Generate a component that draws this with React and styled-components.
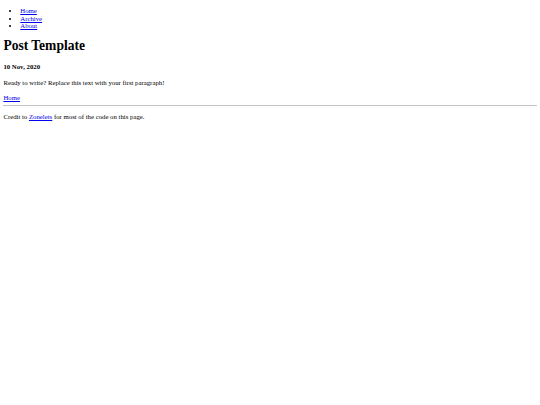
import React from 'react';
import styled, { createGlobalStyle } from 'styled-components';

const GlobalStyle = createGlobalStyle`
  html, body {
    background: #fff;
  }
  body {
    margin: 0 3.4px 3.4px;
    font-family: "Liberation Serif", "Times New Roman", serif;
    font-size: 6.77px;
    line-height: 1.15;
    color: #000;
  }
`;

const NavList = styled.ul`
  margin: 6.77px 0;
  padding-left: 16.9px;
  list-style: disc;
`;

const NavItem = styled.li`
  line-height: 1.15;
`;

const Link = styled.a`
  color: #0000ee;
  text-decoration: underline;
`;

const Title = styled.h1`
  font-size: 13.54px;
  font-weight: 700;
  line-height: 1.15;
  margin: 8px 0 9.07px;
`;

const DateLine = styled.h4`
  font-size: 6.77px;
  font-weight: 700;
  margin: 9px 0;
`;

const Paragraph = styled.p`
  margin: 6.77px 0;
`;

const BackLink = styled.div`
  margin: 0;
`;

const Divider = styled.hr`
  margin: 3.4px 0;
  border: none;
  border-top: 1px solid #c4c4c4;
  height: 0;
`;

export default function App() {
  return (
    <>
      <GlobalStyle />
      <nav>
        <NavList>
          <NavItem><Link href="#">Home</Link></NavItem>
          <NavItem><Link href="#">Archive</Link></NavItem>
          <NavItem><Link href="#">About</Link></NavItem>
        </NavList>
      </nav>
      <main>
        <Title>Post Template</Title>
        <DateLine>10 Nov, 2020</DateLine>
        <Paragraph>Ready to write? Replace this text with your first paragraph!</Paragraph>
        <BackLink><Link href="#">Home</Link></BackLink>
      </main>
      <Divider />
      <footer>
        <Paragraph>
          Credit to <Link href="#">Zonelets</Link> for most of the code on this page.
        </Paragraph>
      </footer>
    </>
  );
}
